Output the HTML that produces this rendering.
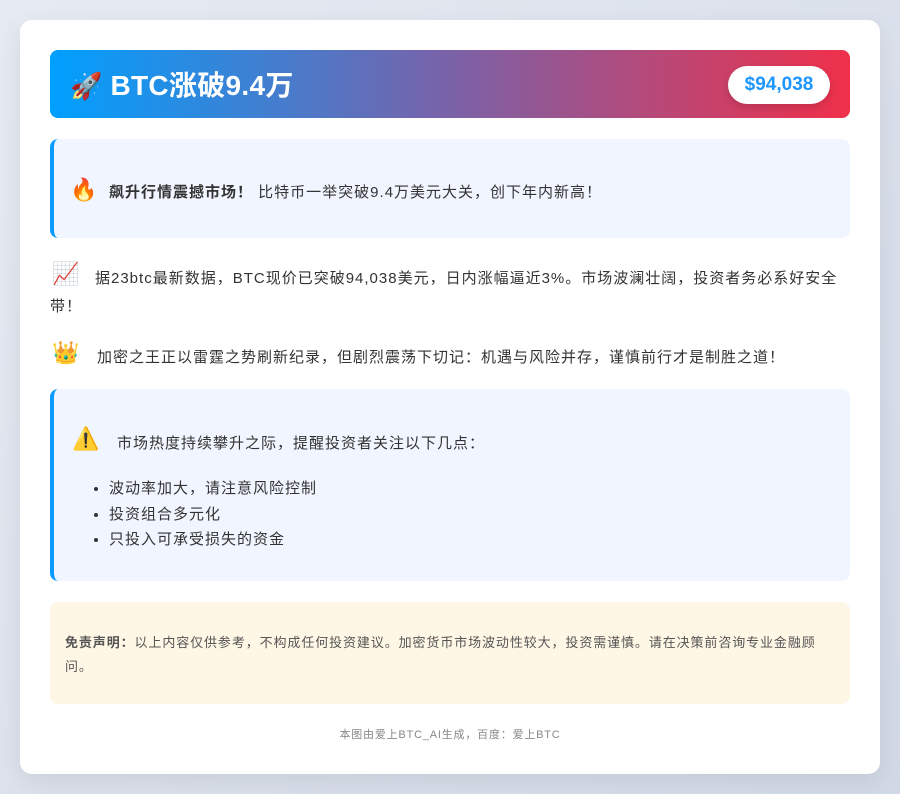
<!DOCTYPE html>
<html><head><meta charset="utf-8"><style>
*{margin:0;padding:0;box-sizing:border-box}
body{width:900px;height:794px;overflow:hidden;background:linear-gradient(135deg,#e6eaf2,#d2d9e6);font-family:"Liberation Sans","Noto Sans CJK SC",sans-serif;color:#333;position:relative}
.card{position:absolute;left:20px;top:20px;width:860px;height:754px;background:#fff;border-radius:12px;box-shadow:0 8px 24px rgba(0,0,0,.08)}
.hdr{position:absolute;left:50px;top:50px;width:800px;height:68px;border-radius:8px;background:linear-gradient(90deg,#00a0ff,#7a62a8 50%,#f0304a)}
.hdr .t{position:absolute;left:20px;top:0;line-height:72px;color:#fff;font-size:28px;font-weight:bold;letter-spacing:.3px}
.pill{position:absolute;left:678px;top:16px;width:102px;height:38px;border-radius:19px;background:#fff;color:#1e96ff;font-weight:bold;font-size:19px;text-align:center;line-height:38px;box-shadow:0 3px 8px rgba(0,0,0,.15)}
.box{position:absolute;left:50px;width:800px;background:#f0f5ff;border-left:4px solid #0a9bff;border-radius:8px}
.e{font-family:"Noto Color Emoji","DejaVu Sans",sans-serif;letter-spacing:0}
.abs{position:absolute;font-size:15px;white-space:nowrap;letter-spacing:1px}
.disc{position:absolute;left:50px;top:602px;width:800px;height:102px;background:#fff7e6;border-radius:8px;font-size:13px;color:#555;padding:29px 16px 0 15px;line-height:24px;letter-spacing:.9px}
.foot{position:absolute;left:0;width:900px;top:726px;text-align:center;font-size:11px;color:#888;letter-spacing:.8px}
ul{position:absolute;left:109px;top:476px;font-size:15px;line-height:25.5px;letter-spacing:1px}
</style></head><body>
<div class="card"></div>
<div class="hdr"><div class="t"><span class="e" style="font-size:26px">🚀</span> BTC涨破9.4万</div><div class="pill">$94,038</div></div>
<div class="box" style="top:139px;height:99px"></div>
<div class="abs" style="left:70px;top:178px"><span class="e" style="font-size:22px">🔥</span></div>
<div class="abs" style="left:109px;top:181px"><b>飙升行情震撼市场！</b> 比特币一举突破9.4万美元大关，创下年内新高！</div>
<div class="abs" style="left:52px;top:262px"><span class="e" style="font-size:22px">📈</span></div>
<div class="abs" style="left:95px;top:267px">据23btc最新数据，BTC现价已突破94,038美元，日内涨幅逼近3%。市场波澜壮阔，投资者务必系好安全</div>
<div class="abs" style="left:50px;top:295px">带！</div>
<div class="abs" style="left:52px;top:341px"><span class="e" style="font-size:22px">👑</span></div>
<div class="abs" style="left:97px;top:346px">加密之王正以雷霆之势刷新纪录，但剧烈震荡下切记：机遇与风险并存，谨慎前行才是制胜之道！</div>
<div class="box" style="top:389px;height:192px"></div>
<div class="abs" style="left:72px;top:427px"><span class="e" style="font-size:22px">⚠️</span></div>
<div class="abs" style="left:117px;top:432px">市场热度持续攀升之际，提醒投资者关注以下几点：</div>
<ul><li>波动率加大，请注意风险控制</li><li>投资组合多元化</li><li>只投入可承受损失的资金</li></ul>
<div class="disc"><b>免责声明：</b>以上内容仅供参考，不构成任何投资建议。加密货币市场波动性较大，投资需谨慎。请在决策前咨询专业金融顾问。</div>
<div class="foot">本图由爱上BTC_AI生成，百度：爱上BTC</div>
</body></html>
